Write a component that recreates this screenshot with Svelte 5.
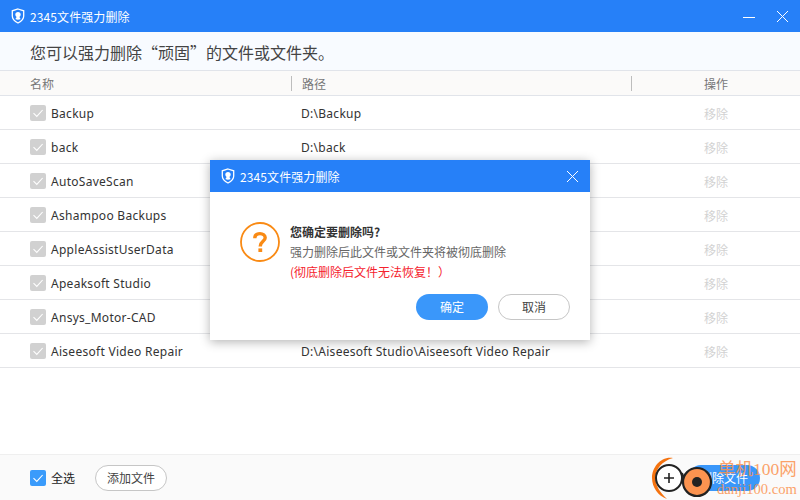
<script>
  const files = [
    { name: 'Backup', path: 'D:\\Backup' },
    { name: 'back', path: 'D:\\back' },
    { name: 'AutoSaveScan', path: 'D:\\AutoSaveScan' },
    { name: 'Ashampoo Backups', path: 'D:\\Ashampoo Backups' },
    { name: 'AppleAssistUserData', path: 'D:\\AppleAssistUserData' },
    { name: 'Apeaksoft Studio', path: 'D:\\Apeaksoft Studio' },
    { name: 'Ansys_Motor-CAD', path: 'D:\\Ansys_Motor-CAD' },
    { name: 'Aiseesoft Video Repair', path: 'D:\\Aiseesoft Studio\\Aiseesoft Video Repair' }
  ];
  const title = '2345文件强力删除';
</script>

{#snippet shield()}
  <svg class="shield" width="14" height="16" viewBox="0 0 14 16">
    <path d="M7 1 L12.7 2.8 V8 C12.7 11.2 10 13.6 7 15 C4 13.6 1.3 11.2 1.3 8 V2.8 Z" fill="none" stroke="#fff" stroke-width="1.3" />
    <path d="M7 4 C8.6 4 9.7 5.1 9.7 6.6 C9.7 7.7 9 8.5 8.4 8.9 L9.6 11 C8.2 11.9 5.8 11.9 4.4 11 L5.6 8.9 C5 8.5 4.3 7.7 4.3 6.6 C4.3 5.1 5.4 4 7 4 Z" fill="#fff" />
  </svg>
{/snippet}

{#snippet close()}
  <svg width="13" height="13" viewBox="0 0 13 13">
    <path d="M1 1 L12 12 M12 1 L1 12" stroke="#fff" stroke-width="1" fill="none" />
  </svg>
{/snippet}

{#snippet tick()}
  <svg width="16" height="16" viewBox="0 0 16 16">
    <path d="M3.5 8.2 L6.8 11.4 L12.6 5" stroke="#fff" stroke-width="1.1" fill="none" />
  </svg>
{/snippet}

<div class="app">
  <header class="titlebar">
    <div class="brand">
      {@render shield()}
      <span>{title}</span>
    </div>
    <div class="winbtns">
      <span class="minimize"></span>
      {@render close()}
    </div>
  </header>

  <div class="subhead">您可以强力删除“顽固”的文件或文件夹。</div>

  <div class="thead">
    <div class="col-name">名称</div>
    <div class="col-path">路径</div>
    <div class="col-op">操作</div>
  </div>

  <div class="rows">
    {#each files as f}
      <div class="row">
        <div class="col-name cell-name">
          <span class="check">{@render tick()}</span>
          <span>{f.name}</span>
        </div>
        <div class="col-path">{f.path}</div>
        <div class="col-op remove">移除</div>
      </div>
    {/each}
  </div>

  <footer class="footer">
    <div class="footer-left">
      <span class="check checked">{@render tick()}</span>
      <span class="all">全选</span>
      <button class="btn outline add">添加文件</button>
    </div>
    <button class="btn primary del">删除文件</button>
  </footer>

  <div class="dialog">
    <div class="dialog-head">
      <div class="brand">
        {@render shield()}
        <span>{title}</span>
      </div>
      {@render close()}
    </div>
    <div class="dialog-body">
      <svg class="question" width="40" height="40" viewBox="0 0 40 40">
        <circle cx="20" cy="20" r="19" fill="none" stroke="#f98a14" stroke-width="1.8" />
        <path d="M14.8 16.2 C14.8 13.2 17 11.6 20 11.6 C23 11.6 25.2 13.4 25.2 15.8 C25.2 19.4 20.2 19.4 20.2 24.4" fill="none" stroke="#f98a14" stroke-width="3.4" />
        <rect x="18.4" y="26.4" width="3.8" height="3.6" fill="#f98a14" />
      </svg>
      <div class="message">
        <div class="ask">您确定要删除吗?</div>
        <div class="desc">强力删除后此文件或文件夹将被彻底删除</div>
        <div class="warn">(彻底删除后文件无法恢复！）</div>
      </div>
    </div>
    <div class="dialog-actions">
      <button class="btn primary ok">确定</button>
      <button class="btn outline cancel">取消</button>
    </div>
  </div>

  <div class="watermark">
    <svg width="70" height="52" viewBox="0 0 70 52">
      <path d="M23 10 C11 8 2 19 2 30 C2 39 8 48 17 51 C10 44 5.5 38 5.5 30 C5.5 21 12 13 23 10 Z" fill="#f57310" />
      <circle cx="19" cy="30" r="13" fill="#fff" stroke="#222" stroke-width="2" />
      <path d="M14 30 H24 M19 25 V35" stroke="#222" stroke-width="1.6" />
      <path d="M32 25 C33 29 34 31 36 33" fill="none" stroke="#222" stroke-width="2" />
      <circle cx="47" cy="34" r="14" fill="#fb9350" stroke="#222" stroke-width="2.2" />
      <circle cx="47" cy="34" r="5" fill="#222" />
    </svg>
    <div class="mark-text">
      <div class="mark-cn">单机100网</div>
      <div class="mark-en">danji100.com</div>
    </div>
  </div>
</div>

<style>
  :global(body) {
    margin: 0;
    overflow: hidden;
  }

  .app {
    position: relative;
    width: 800px;
    height: 500px;
    display: flex;
    flex-direction: column;
    background: #fff;
    color: #333;
    font-family: "Noto Sans CJK SC", "Noto Sans", sans-serif;
    font-size: 12px;
    overflow: hidden;
  }

  .titlebar {
    height: 32px;
    flex: none;
    display: flex;
    align-items: center;
    justify-content: space-between;
    padding: 0 11px;
    background: #2680f8;
    color: #fff;
  }

  .brand {
    display: flex;
    align-items: center;
    gap: 5px;
    font-size: 12px;
    letter-spacing: 0.1px;
  }

  .winbtns {
    display: flex;
    align-items: center;
    gap: 21px;
  }

  .minimize {
    width: 12px;
    height: 1px;
    background: #fff;
    margin-top: 3px;
  }

  .subhead {
    height: 39px;
    flex: none;
    box-sizing: border-box;
    padding-left: 30px;
    line-height: 40px;
    background: #f8fbff;
    border-bottom: 1px solid #e1e4ea;
    font-size: 16px;
    color: #444;
  }

  .thead {
    height: 25px;
    flex: none;
    box-sizing: border-box;
    display: flex;
    align-items: center;
    padding-top: 1px;
    background: #fbfaf9;
    border-bottom: 1px solid #e1e4ea;
    color: #777;
    font-size: 12px;
  }

  .col-name {
    width: 291px;
    flex: none;
    box-sizing: border-box;
    padding-left: 30px;
  }

  .col-path {
    flex: 1;
    box-sizing: border-box;
    padding-left: 10px;
  }

  .col-op {
    width: 168px;
    flex: none;
    text-align: center;
  }

  .thead .col-path,
  .thead .col-op {
    border-left: 1px solid #bdbdbd;
    height: 15px;
    line-height: 15px;
  }

  .row {
    height: 34px;
    box-sizing: border-box;
    display: flex;
    align-items: center;
    padding-top: 1px;
    border-bottom: 1px solid #e4e5e8;
    color: #333;
    font-family: "Noto Sans", "Noto Sans CJK SC", sans-serif;
    font-size: 12px;
    letter-spacing: 0.28px;
  }

  .cell-name {
    display: flex;
    align-items: center;
    gap: 5px;
  }

  .check {
    width: 16px;
    height: 16px;
    flex: none;
    display: block;
    border-radius: 2px;
    background: #d1d1d1;
  }

  .check svg {
    display: block;
  }

  .checked {
    background: #3a9bfb;
  }

  .remove {
    color: #d2d2d2;
    font-family: "Noto Sans CJK SC", sans-serif;
    letter-spacing: 0;
  }

  .rows {
    flex: 1;
  }

  .footer {
    height: 46px;
    flex: none;
    box-sizing: border-box;
    display: flex;
    align-items: center;
    justify-content: space-between;
    padding: 0 40px 0 30px;
    background: #fafafa;
    border-top: 1px solid #efefef;
  }

  .footer-left {
    display: flex;
    align-items: center;
  }

  .all {
    margin-left: 5px;
    color: #222;
  }

  .btn {
    box-sizing: border-box;
    height: 26px;
    padding: 0;
    border-radius: 13px;
    border: 1px solid transparent;
    font-family: inherit;
    font-size: 12px;
    line-height: 22px;
  }

  .outline {
    background: #fff;
    border-color: #c6c6c6;
    color: #444;
  }

  .primary {
    background: #3a97fa;
    color: #fff;
  }

  .add {
    width: 72px;
    margin-left: 20px;
  }

  .del {
    width: 72px;
  }

  .dialog {
    position: absolute;
    left: 210px;
    top: 160px;
    width: 380px;
    height: 180px;
    display: flex;
    flex-direction: column;
    background: #fff;
    box-shadow: 0 2px 10px rgba(0, 0, 0, 0.3);
  }

  .dialog-head {
    height: 32px;
    flex: none;
    display: flex;
    align-items: center;
    justify-content: space-between;
    padding: 0 11px;
    background: #2680f8;
    color: #fff;
  }

  .dialog-body {
    display: flex;
    padding: 30px 0 0 30px;
    height: 102px;
    box-sizing: border-box;
  }

  .message {
    margin-left: 10px;
    line-height: 20px;
  }

  .ask {
    font-weight: 700;
    color: #333;
  }

  .desc {
    color: #666;
  }

  .warn {
    color: #f5222d;
  }

  .dialog-actions {
    display: flex;
    justify-content: flex-end;
    gap: 10px;
    padding-right: 20px;
  }

  .ok,
  .cancel {
    width: 72px;
  }

  .watermark {
    position: absolute;
    right: 0;
    bottom: 0;
    width: 150px;
    height: 52px;
    pointer-events: none;
  }

  .watermark svg {
    position: absolute;
    left: 0;
    top: 0;
  }

  .mark-text {
    position: absolute;
    left: 67px;
    top: 11px;
    color: #fb9350;
    font-family: "Liberation Serif", "Noto Sans CJK SC", serif;
    white-space: nowrap;
    opacity: 0.85;
  }

  .mark-cn {
    font-size: 17.5px;
    line-height: 20px;
    padding-left: 1px;
  }

  .mark-en {
    font-size: 14.6px;
    line-height: 20px;
  }
</style>
